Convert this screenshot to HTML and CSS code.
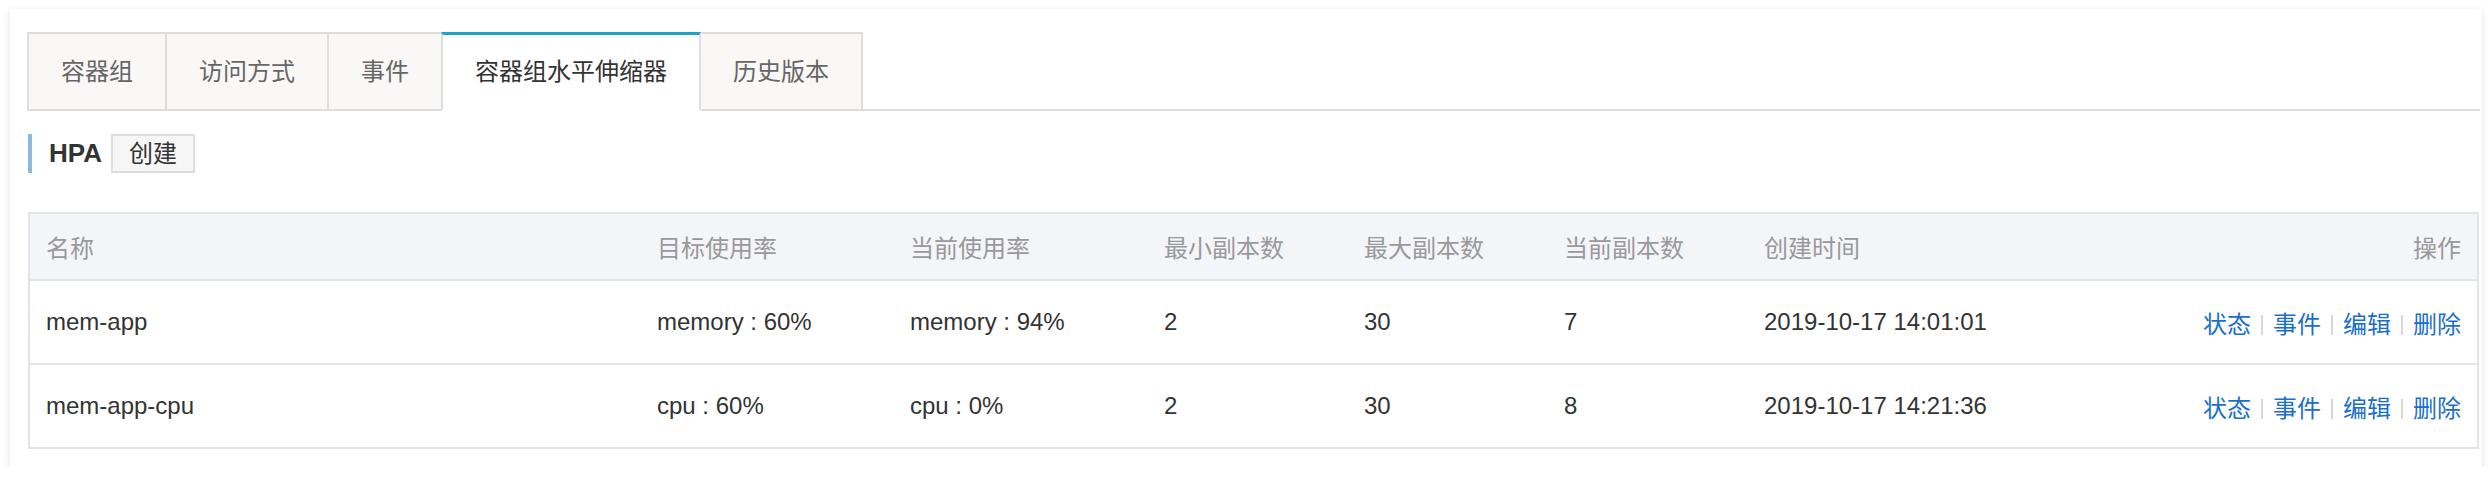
FILE: index.html
```html
<!DOCTYPE html>
<html lang="zh-CN">
<head>
<meta charset="utf-8">
<title>HPA</title>
<link rel="stylesheet" href="styles.css">
</head>
<body>
<div class="card">
  <div class="tabs">
    <div class="tab">容器组</div>
    <div class="tab">访问方式</div>
    <div class="tab">事件</div>
    <div class="tab active">容器组水平伸缩器</div>
    <div class="tab">历史版本</div>
  </div>
  <div class="section-head">
    <span class="section-title">HPA</span>
    <button class="btn">创建</button>
  </div>
  <table class="grid">
    <colgroup>
      <col class="c-name">
      <col class="c-target">
      <col class="c-current">
      <col class="c-num">
      <col class="c-num">
      <col class="c-num">
      <col class="c-time">
      <col class="c-ops">
    </colgroup>
    <thead>
      <tr>
        <th>名称</th>
        <th>目标使用率</th>
        <th>当前使用率</th>
        <th>最小副本数</th>
        <th>最大副本数</th>
        <th>当前副本数</th>
        <th>创建时间</th>
        <th class="right">操作</th>
      </tr>
    </thead>
    <tbody>
      <tr>
        <td>mem-app</td>
        <td>memory : 60%</td>
        <td>memory : 94%</td>
        <td>2</td>
        <td>30</td>
        <td>7</td>
        <td>2019-10-17 14:01:01</td>
        <td class="right ops"><a>状态</a><span class="sep"></span><a>事件</a><span class="sep"></span><a>编辑</a><span class="sep"></span><a>删除</a></td>
      </tr>
      <tr>
        <td>mem-app-cpu</td>
        <td>cpu : 60%</td>
        <td>cpu : 0%</td>
        <td>2</td>
        <td>30</td>
        <td>8</td>
        <td>2019-10-17 14:21:36</td>
        <td class="right ops"><a>状态</a><span class="sep"></span><a>事件</a><span class="sep"></span><a>编辑</a><span class="sep"></span><a>删除</a></td>
      </tr>
    </tbody>
  </table>
</div>
</body>
</html>
```
FILE: styles.css
```css
* { box-sizing: border-box; }

html, body {
  margin: 0;
  background: #ffffff;
}

body {
  padding: 9px 10px 0 10px;
  font-family: "Liberation Sans", "Noto Sans CJK SC", sans-serif;
  font-size: 24px;
  color: #333333;
}

.card {
  width: 2472px;
  background: #ffffff;
  padding: 23px 2px 18px 17px;
  box-shadow: 0 2px 7px rgba(0, 0, 0, 0.13);
}

.tabs {
  display: flex;
  border-bottom: 2px solid #dddddd;
  height: 79px;
}

.tab {
  height: 79px;
  padding: 0 32px;
  border: 2px solid #dddddd;
  background: #f9f8f6;
  color: #666666;
  line-height: 75px;
  font-size: 24px;
  white-space: nowrap;
}

.tab + .tab {
  margin-left: -2px;
}

.tab.active {
  position: relative;
  z-index: 1;
  background: #ffffff;
  color: #333333;
  border-top: 3px solid #1ea2c8;
  border-bottom-color: #ffffff;
  line-height: 74px;
}

.section-head {
  display: flex;
  align-items: center;
  height: 39px;
  margin-top: 23px;
  margin-left: 1px;
  border-left: 4px solid #8cb9e1;
  padding-left: 17px;
}

.section-title {
  font-size: 26px;
  font-weight: bold;
  color: #333333;
}

.btn {
  margin-left: 9px;
  height: 39px;
  padding: 0 16px;
  border: 2px solid #dddddd;
  background: #f6f6f6;
  color: #333333;
  font-family: inherit;
  font-size: 24px;
  line-height: 35px;
}

.grid {
  margin-top: 39px;
  margin-left: 1px;
  width: 2451px;
  table-layout: fixed;
  border-collapse: separate;
  border-spacing: 0;
  border: 2px solid #e1e5ea;
}

.c-name { width: 611px; }
.c-target { width: 253px; }
.c-current { width: 254px; }
.c-num { width: 200px; }
.c-time { width: 400px; }

.grid th,
.grid td {
  padding: 0 16px;
  text-align: left;
  white-space: nowrap;
}

.grid th {
  height: 67px;
  background: #f4f5f8;
  color: #999999;
  font-weight: normal;
  border-bottom: 2px solid #e1e5ea;
}

.grid td {
  height: 84px;
  color: #333333;
  border-bottom: 2px solid #e1e5ea;
}

.grid tbody tr:last-child td {
  border-bottom: none;
  height: 82px;
}

.grid .right {
  text-align: right;
}

.ops a {
  color: #1b6fcb;
  text-decoration: none;
}

.sep {
  display: inline-block;
  width: 2px;
  height: 20px;
  margin: 0 10px;
  background: #d8d8d8;
  vertical-align: -2px;
}
```
